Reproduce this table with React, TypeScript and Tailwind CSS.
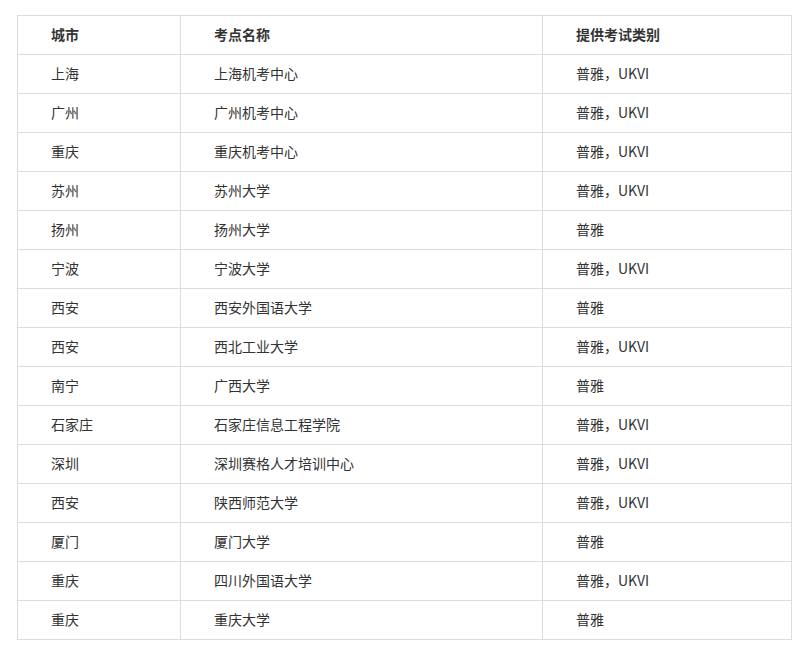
const rows: [string, string, string][] = [
  ["上海", "上海机考中心", "普雅，UKVI"],
  ["广州", "广州机考中心", "普雅，UKVI"],
  ["重庆", "重庆机考中心", "普雅，UKVI"],
  ["苏州", "苏州大学", "普雅，UKVI"],
  ["扬州", "扬州大学", "普雅"],
  ["宁波", "宁波大学", "普雅，UKVI"],
  ["西安", "西安外国语大学", "普雅"],
  ["西安", "西北工业大学", "普雅，UKVI"],
  ["南宁", "广西大学", "普雅"],
  ["石家庄", "石家庄信息工程学院", "普雅，UKVI"],
  ["深圳", "深圳赛格人才培训中心", "普雅，UKVI"],
  ["西安", "陕西师范大学", "普雅，UKVI"],
  ["厦门", "厦门大学", "普雅"],
  ["重庆", "四川外国语大学", "普雅，UKVI"],
  ["重庆", "重庆大学", "普雅"],
];

const cell = "h-[39px] border border-[#dddddd] pl-[33px] pb-[1px] text-left align-middle";

const App = () => {
  return (
    <div className="min-h-[649px] w-[810px] bg-white pt-[15px] pl-[17px] font-['Noto_Sans_CJK_SC','Noto_Sans',sans-serif] text-[14px] text-[#333333]">
      <table className="w-[774px] table-fixed border-collapse border border-[#dddddd]">
        <colgroup>
          <col className="w-[163px]" />
          <col className="w-[362px]" />
          <col className="w-[249px]" />
        </colgroup>
        <thead>
          <tr>
            <th className={`${cell} font-bold`}>城市</th>
            <th className={`${cell} font-bold`}>考点名称</th>
            <th className={`${cell} font-bold`}>提供考试类别</th>
          </tr>
        </thead>
        <tbody>
          {rows.map((r, i) => (
            <tr key={i}>
              <td className={cell}>{r[0]}</td>
              <td className={cell}>{r[1]}</td>
              <td className={cell}>{r[2]}</td>
            </tr>
          ))}
        </tbody>
      </table>
    </div>
  );
};

export default App;
